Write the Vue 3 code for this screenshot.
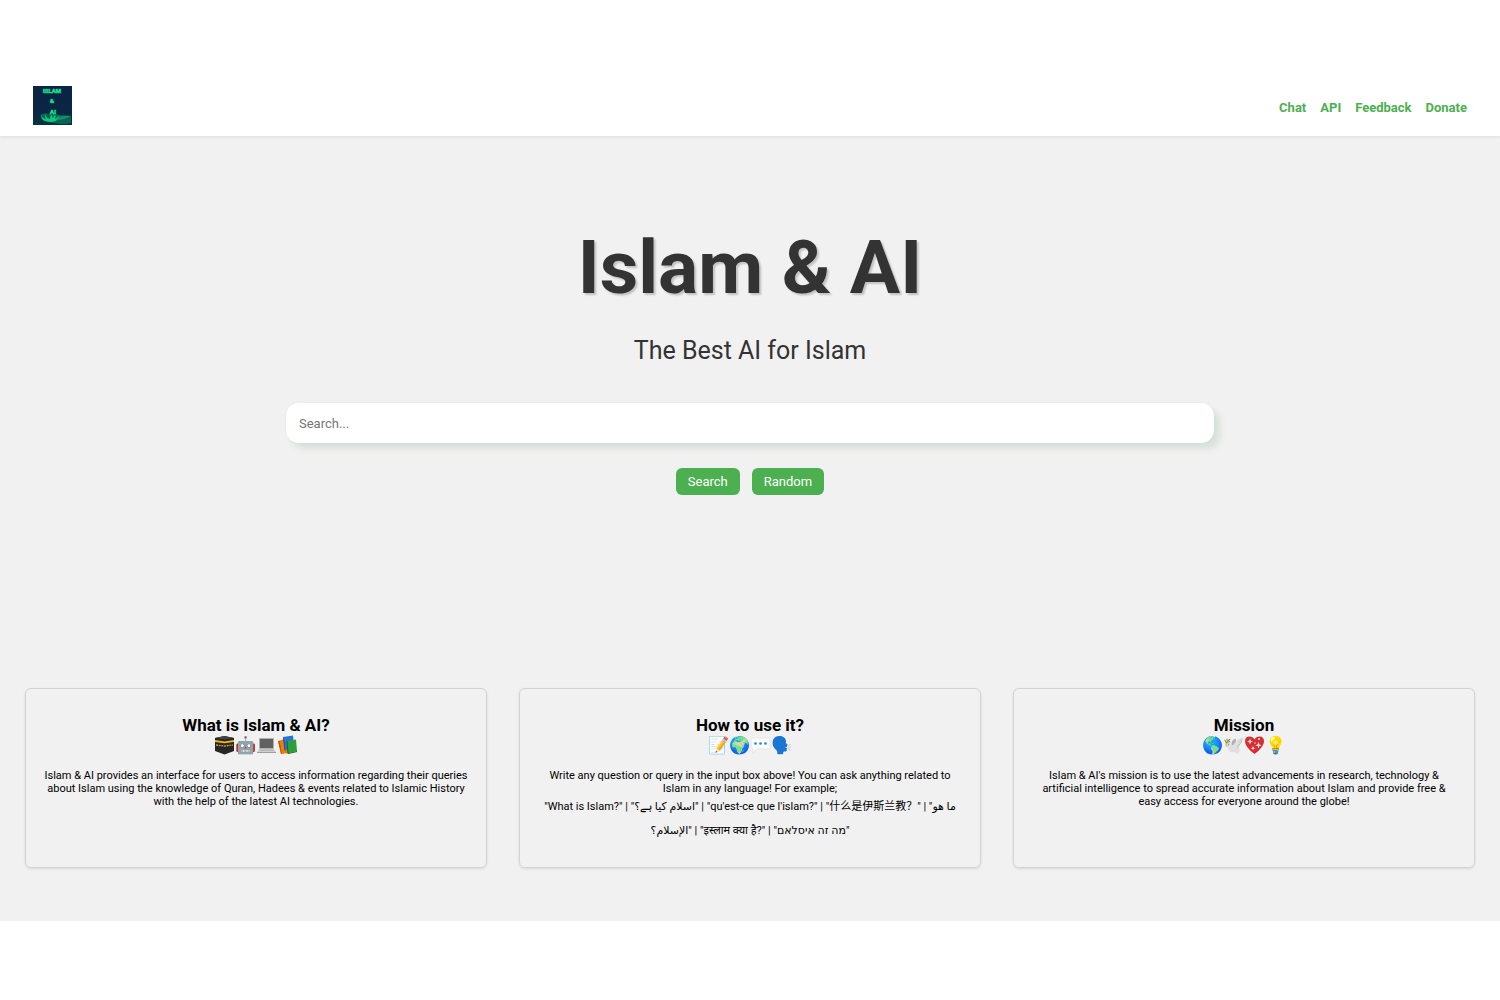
<template>
  <div class="page">
    <header class="header">
      <a href="#" class="logo" aria-label="Islam &amp; AI home">
        <svg viewBox="0 0 39 39" width="39" height="39">
          <defs>
            <linearGradient id="night" x1="0" y1="0" x2="0" y2="1">
              <stop offset="0" stop-color="#0c2345" />
              <stop offset="0.7" stop-color="#0b2644" />
              <stop offset="1" stop-color="#08343f" />
            </linearGradient>
          </defs>
          <rect width="39" height="39" fill="url(#night)" />
          <path d="M7 29q4-3 9-1q5-2 10 1q6 0 12 1v7q-8 2-16 0q-11 0-15-8z" fill="#0a7a58" opacity="0.7" />
          <path d="M8 29q1 3 5 4q-2-3-1-5q1 4 5 5l1-5l2 4l2-4q1 3 0 5q3-2 4-4q0 3-3 6q-6 2-11 0q-4-1-4-6z" fill="#12c878" />
          <path d="M22 33q7-4 16-3q-7 4-14 4z" fill="#10a56b" opacity="0.7" />
          <g class="logo-text" text-anchor="middle">
            <text x="19" y="7">ISLAM</text>
            <text x="19" y="17">&amp;</text>
            <text x="20" y="28">AI</text>
          </g>
        </svg>
      </a>
      <nav class="nav">
        <a v-for="link in links" :key="link" href="#">{{ link }}</a>
      </nav>
    </header>

    <main class="main">
      <section class="hero">
        <h1>Islam &amp; AI</h1>
        <p class="tagline">The Best AI for Islam</p>
        <form class="search" @submit.prevent>
          <input v-model="query" type="text" placeholder="Search..." aria-label="Search" />
          <div class="buttons">
            <button type="submit">Search</button>
            <button type="button">Random</button>
          </div>
        </form>
      </section>

      <section class="cards">
        <article v-for="card in cards" :key="card.title" class="card">
          <h2>{{ card.title }}</h2>
          <div class="emojis">
            <template v-for="emoji in card.emojis" :key="emoji">
              <svg v-if="emoji === 'kaaba'" viewBox="0 0 21 20" width="21" height="20" role="img" aria-label="Kaaba">
                <path d="M1 3l9.500-2 9.500 2v13l-9.500 3.500L1 16z" fill="#262626" />
                <path d="M1 3l9.500-2 9.500 2-9.500 1.500z" fill="#424242" />
                <path d="M1 5l9.500 1.500L20 5v2l-9.500 1.300L1 7z" fill="#f5b51b" />
                <path d="M2 10l8.500 1 8.500-1" fill="none" stroke="#c99a1e" stroke-width="1.300" stroke-dasharray="2 0.700" />
              </svg>
              <svg v-else-if="emoji === 'laptop'" viewBox="0 0 21 20" width="21" height="20" role="img" aria-label="Laptop">
                <rect x="3" y="3" width="15" height="11" rx="1" fill="#b0b0b0" />
                <rect x="4" y="4" width="13" height="9" fill="#616161" />
                <path d="M3 14h15l2 3H1z" fill="#d0d0d0" />
                <path d="M4 14.500h13l1 1.500H3z" fill="#b8b8b8" />
                <path d="M1 17h19v1H1z" fill="#9e9e9e" />
              </svg>
              <svg v-else-if="emoji === 'books'" viewBox="0 0 21 20" width="21" height="20" role="img" aria-label="Books">
                <path d="M1 6l7-2 4 14-8 1z" fill="#f57c00" />
                <path d="M1 6l3 13 1-.2L2.500 6z" fill="#bf5600" />
                <path d="M6 2l10-1.500 1.500 13-10 1.500z" fill="#2a73d9" />
                <path d="M6 2l1.500 13 1 2L7 4z" fill="#174a9c" />
                <path d="M9.500 6L19 4.500l1 11.500-9.500 2.500z" fill="#2f9e3c" />
                <path d="M9.500 6l1 12.500 1 .5 8.500-2v-1l-8.500 2L10.500 6z" fill="#17692a" />
              </svg>
              <svg v-else-if="emoji === 'speech'" viewBox="0 0 21 20" width="21" height="20" role="img" aria-label="Speech balloon">
                <path d="M2 3h17q1 0 1 1v9q0 1-1 1H7l-4 4v-4H2q-1 0-1-1V4q0-1 1-1z" fill="#fafafa" stroke="#dedede" stroke-width="0.600" />
                <g fill="#1e88d9">
                  <circle cx="5.500" cy="8.500" r="1.300" />
                  <circle cx="10.500" cy="8.500" r="1.300" />
                  <circle cx="15.500" cy="8.500" r="1.300" />
                </g>
              </svg>
              <svg v-else-if="emoji === 'heart'" viewBox="0 0 21 20" width="21" height="20" role="img" aria-label="Sparkling heart">
                <path d="M10.500 19Q1 12 1 6.500Q1 1.500 5.500 1.500Q9 1.500 10.500 4.500Q12 1.500 15.500 1.500Q20 1.500 20 6.500Q20 12 10.500 19z" fill="#d32f34" />
                <g fill="#ffe3e3">
                  <path d="M6 3.500l.8 2.200 2.200.8-2.200.8L6 9.500l-.8-2.200L3 6.500l2.200-.8z" />
                  <path d="M14.500 7l.9 2.400 2.400.8-2.400.8-.9 2.400-.9-2.400-2.400-.8 2.400-.8z" />
                  <path d="M9 11l.6 1.600 1.600.6-1.600.6L9 15.400l-.6-1.600-1.600-.6 1.600-.6z" />
                  <circle cx="15" cy="4" r="0.900" />
                  <circle cx="11" cy="8" r="0.700" />
                </g>
              </svg>
              <span v-else>{{ emoji }}</span>
            </template>
          </div>
          <p>{{ card.text }}</p>
          <p v-if="card.examples" class="examples">{{ card.examples }}</p>
        </article>
      </section>
    </main>
  </div>
</template>

<script setup>
import { ref } from 'vue';

const query = ref('');

const links = ['Chat', 'API', 'Feedback', 'Donate'];

const cards = [
  {
    title: 'What is Islam & AI?',
    emojis: ['kaaba', '🤖', 'laptop', 'books'],
    text: 'Islam & AI provides an interface for users to access information regarding their queries about Islam using the knowledge of Quran, Hadees & events related to Islamic History with the help of the latest AI technologies.'
  },
  {
    title: 'How to use it?',
    emojis: ['📝', '🌍', 'speech', '🗣️'],
    text: 'Write any question or query in the input box above! You can ask anything related to Islam in any language! For example;',
    examples: '"What is Islam?" | "اسلام کیا ہے؟" | "qu\'est-ce que l\'islam?" | "什么是伊斯兰教？" | "ما هو الإسلام؟" | "इस्लाम क्या है?" | "מה זה איסלאם"'
  },
  {
    title: 'Mission',
    emojis: ['🌎', '🕊️', 'heart', '💡'],
    text: "Islam & AI's mission is to use the latest advancements in research, technology & artificial intelligence to spread accurate information about Islam and provide free & easy access for everyone around the globe!"
  }
];
</script>

<style>
body {
  background: #fff;
}
</style>

<style scoped>
.page {
  padding: 75px 0 79px;
  font-family: Roboto, "Noto Sans", "DejaVu Sans", "Noto Sans CJK SC", sans-serif;
  color: #000;
}

.header {
  position: relative;
  display: flex;
  justify-content: space-between;
  align-items: center;
  padding: 11px 33px;
  background: #fff;
  box-shadow: 0 2px 2px rgba(0, 0, 0, 0.05);
}

.logo svg {
  display: block;
}

.logo-text {
  font-family: Roboto, sans-serif;
  font-size: 6px;
  font-weight: 900;
  fill: #14e08a;
  stroke: #14e08a;
  stroke-width: 0.4px;
}

.nav {
  display: flex;
  gap: 14px;
  padding-top: 4px;
}

.nav a {
  font-size: 13px;
  line-height: 16px;
  font-weight: 700;
  color: #4caf50;
  text-decoration: none;
}

.main {
  padding: 86px 25px 53px;
  background: #f1f1f1;
}

.hero {
  display: flex;
  flex-direction: column;
  align-items: center;
  color: #333;
}

h1 {
  margin: 0;
  font-size: 75px;
  line-height: 90px;
  font-weight: 700;
  text-shadow: 2px 2px 2px rgba(0, 0, 0, 0.2);
}

.tagline {
  margin: 24px 0 37px;
  font-size: 25px;
  line-height: 30px;
}

.search {
  width: 64%;
}

.search input {
  display: block;
  box-sizing: border-box;
  width: 100%;
  height: 40px;
  padding: 0 13px;
  border: none;
  border-radius: 13px;
  background: #fff;
  font-family: inherit;
  font-size: 13px;
  box-shadow: 6px 6px 6px rgba(0, 90, 30, 0.1), 0 0 4px rgba(0, 0, 0, 0.04);
}

.search input::placeholder {
  color: #757575;
}

.buttons {
  display: flex;
  justify-content: center;
  gap: 12px;
  margin-top: 25px;
}

.buttons button {
  height: 27px;
  padding: 0 12px;
  border: none;
  border-radius: 6px;
  background: #4caf50;
  color: #fff;
  font-family: inherit;
  font-size: 13px;
}

.cards {
  display: grid;
  grid-template-columns: repeat(3, 1fr);
  gap: 32px;
  margin-top: 193px;
}

.card {
  padding: 26px 17px 24px;
  border: 1px solid #d3d3d3;
  border-radius: 6px;
  text-align: center;
  box-shadow: 0 1px 3px rgba(0, 0, 0, 0.1);
}

h2 {
  margin: 0;
  font-size: 17px;
  line-height: 20px;
  font-weight: 700;
}

.emojis {
  display: flex;
  justify-content: center;
  font-size: 17px;
  line-height: 20px;
}

.card p {
  margin: 14px 0 0;
  font-size: 11px;
  line-height: 13px;
}

.card .examples {
  margin: 0;
  line-height: 24px;
}
</style>
